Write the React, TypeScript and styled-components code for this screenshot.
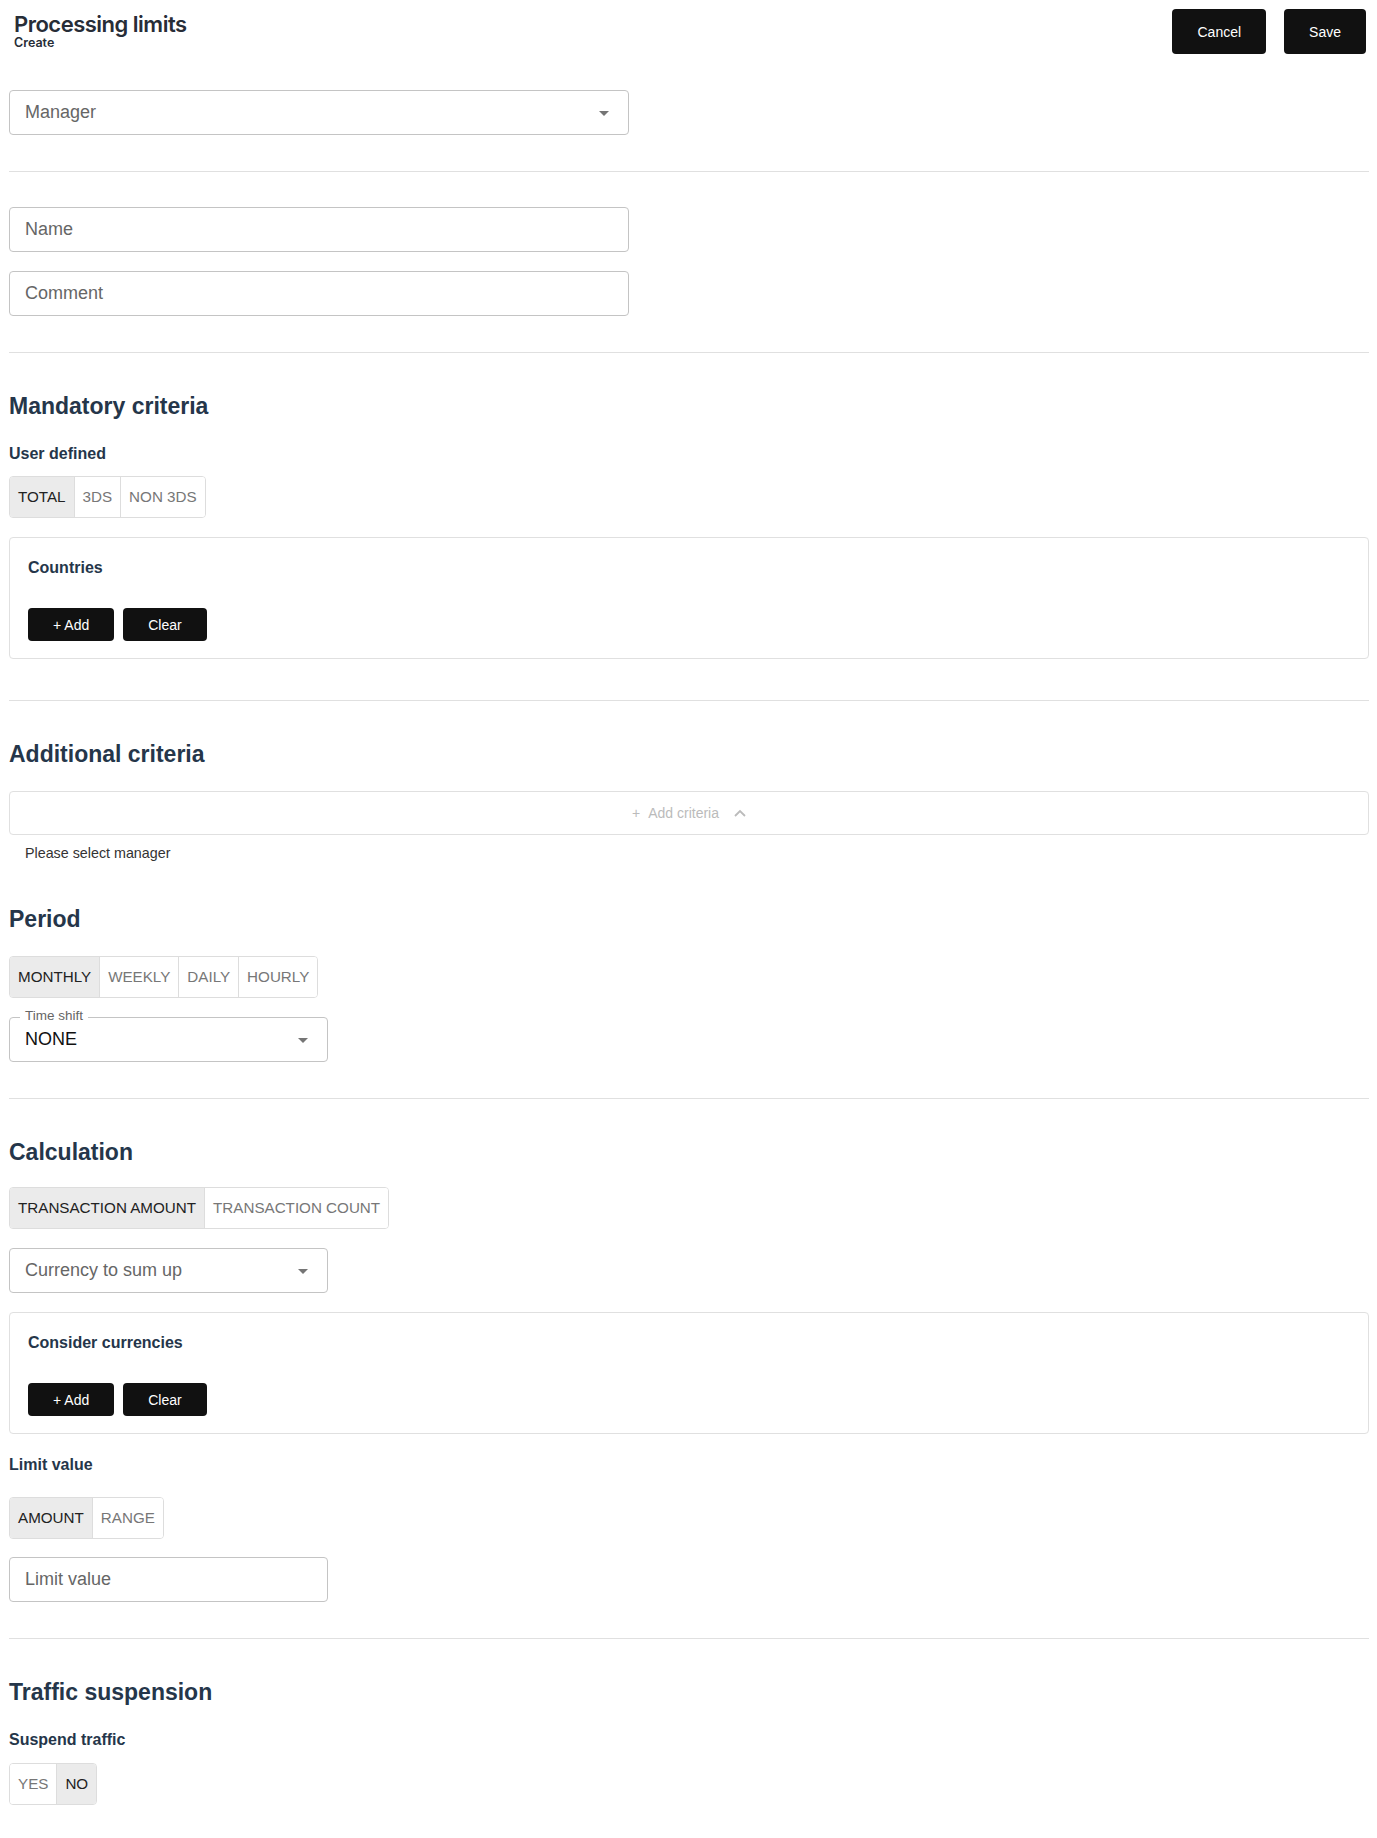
import React from "react";
import styled, { createGlobalStyle } from "styled-components";

const GlobalStyle = createGlobalStyle`
    body {
        margin: 0;
        background: #ffffff;
        font-family: "Liberation Sans", Arial, sans-serif;
        color: #222;
    }
`;

const Page = styled.div`
    padding: 0 8px 33px 9px;
`;

const Header = styled.header`
    display: flex;
    justify-content: space-between;
    align-items: flex-start;
    padding: 9px 3px 0 5px;
`;

const TitleBlock = styled.div`
    padding-top: 3px;
    font-family: Inter, "Noto Sans", sans-serif;
    color: #272d37;
`;

const Title = styled.h1`
    margin: 0;
    font-size: 22px;
    line-height: 24px;
    font-weight: 600;
    letter-spacing: -0.5px;
`;

const Subtitle = styled.div`
    font-size: 12.5px;
    line-height: 14px;
    font-weight: 600;
`;

const Actions = styled.div`
    display: flex;
    gap: 18px;
`;

const DarkButton = styled.button<{ $tall?: boolean }>`
    height: ${(p) => (p.$tall ? "45px" : "33px")};
    padding: 0 25px;
    border: none;
    border-radius: 4px;
    background: #111111;
    color: #ffffff;
    font-family: "Liberation Sans", Arial, sans-serif;
    font-size: 14px;
    cursor: pointer;
`;

const Divider = styled.hr<{ $mt: number }>`
    margin: ${(p) => p.$mt}px 0 0;
    border: none;
    border-top: 1px solid #e0e0e0;
    height: 0;
`;

const Input = styled.input<{ $mt: number; $narrow?: boolean }>`
    display: block;
    box-sizing: border-box;
    margin-top: ${(p) => p.$mt}px;
    width: ${(p) => (p.$narrow ? "319px" : "620px")};
    height: 45px;
    padding: 0 15px;
    border: 1px solid #c4c4c4;
    border-radius: 4px;
    font-family: "Liberation Sans", Arial, sans-serif;
    font-size: 18px;
    color: #111;
    outline: none;

    &::placeholder {
        color: #666;
    }
`;

const SelectBox = styled.div<{ $mt: number; $narrow?: boolean }>`
    position: relative;
    box-sizing: border-box;
    margin-top: ${(p) => p.$mt}px;
    width: ${(p) => (p.$narrow ? "319px" : "620px")};
    height: 45px;
    padding: 0 12px 0 15px;
    display: flex;
    align-items: center;
    justify-content: space-between;
    border: 1px solid #c4c4c4;
    border-radius: 4px;
    font-size: 18px;
`;

const SelectValue = styled.span<{ $filled?: boolean }>`
    color: ${(p) => (p.$filled ? "#111" : "#666")};
`;

const FloatLabel = styled.span`
    position: absolute;
    top: -10px;
    left: 10px;
    padding: 0 5px;
    background: #ffffff;
    font-size: 13.5px;
    line-height: 16px;
    color: #666;
`;

const SectionTitle = styled.h2<{ $mt: number }>`
    margin: ${(p) => p.$mt}px 0 0;
    font-size: 23px;
    line-height: 28px;
    font-weight: 700;
    color: #25364a;
`;

const FieldLabel = styled.div<{ $mt: number }>`
    margin-top: ${(p) => p.$mt}px;
    font-size: 16px;
    line-height: 20px;
    font-weight: 700;
    color: #25364a;
`;

const ToggleGroup = styled.div<{ $mt: number }>`
    display: flex;
    width: fit-content;
    margin-top: ${(p) => p.$mt}px;
    height: 42px;
    box-sizing: border-box;
    border: 1px solid #dddddd;
    border-radius: 4px;
    overflow: hidden;
`;

const ToggleItem = styled.button<{ $active?: boolean }>`
    padding: 0 8px 2px;
    border: none;
    border-left: 1px solid #dddddd;
    background: ${(p) => (p.$active ? "#ebebeb" : "#ffffff")};
    color: ${(p) => (p.$active ? "#222" : "#777")};
    font-family: "Liberation Sans", Arial, sans-serif;
    font-size: 15.2px;
    cursor: pointer;

    &:first-child {
        border-left: none;
    }
`;

const Card = styled.div<{ $mt: number }>`
    margin-top: ${(p) => p.$mt}px;
    padding: 20px 18px 17px;
    border: 1px solid #e0e0e0;
    border-radius: 4px;
`;

const ButtonRow = styled.div`
    display: flex;
    gap: 9px;
    margin-top: 30px;
`;

const CriteriaBar = styled.div<{ $mt: number }>`
    margin-top: ${(p) => p.$mt}px;
    height: 44px;
    box-sizing: border-box;
    display: flex;
    align-items: center;
    justify-content: center;
    gap: 8px;
    border: 1px solid #e0e0e0;
    border-radius: 4px;
    color: #bbbbbb;
    font-size: 14px;
`;

const CriteriaText = styled.span`
    margin-right: 7px;
`;

const Hint = styled.div<{ $mt: number }>`
    margin-top: ${(p) => p.$mt}px;
    padding-left: 16px;
    font-size: 14.3px;
    line-height: 20px;
    color: #333;
`;

const DropArrow = () => (
    <svg width="24" height="24" viewBox="0 0 24 24" fill="#757575">
        <path d="M7 10l5 5 5-5z" />
    </svg>
);

const Caret = () => (
    <svg width="12" height="8" viewBox="0 0 12 8" fill="none" stroke="#bbbbbb" strokeWidth="1.8">
        <polyline points="1,7 6,2 11,7" />
    </svg>
);

const Toggles: React.FC<{ items: string[]; active: number; mt: number }> = ({ items, active, mt }) => (
    <ToggleGroup $mt={mt}>
        {items.map((item, i) => (
            <ToggleItem key={item} $active={i === active}>
                {item}
            </ToggleItem>
        ))}
    </ToggleGroup>
);

const ListCard: React.FC<{ title: string; mt: number }> = ({ title, mt }) => (
    <Card $mt={mt}>
        <FieldLabel $mt={0}>{title}</FieldLabel>
        <ButtonRow>
            <DarkButton>+ Add</DarkButton>
            <DarkButton>Clear</DarkButton>
        </ButtonRow>
    </Card>
);

const App: React.FC = () => {
    return (
        <Page>
            <GlobalStyle />
            <Header>
                <TitleBlock>
                    <Title>Processing limits</Title>
                    <Subtitle>Create</Subtitle>
                </TitleBlock>
                <Actions>
                    <DarkButton $tall>Cancel</DarkButton>
                    <DarkButton $tall>Save</DarkButton>
                </Actions>
            </Header>

            <SelectBox $mt={36}>
                <SelectValue>Manager</SelectValue>
                <DropArrow />
            </SelectBox>

            <Divider $mt={36} />

            <Input $mt={35} placeholder="Name" />
            <Input $mt={19} placeholder="Comment" />

            <Divider $mt={36} />

            <SectionTitle $mt={39}>Mandatory criteria</SectionTitle>
            <FieldLabel $mt={24}>User defined</FieldLabel>
            <Toggles mt={12} items={["TOTAL", "3DS", "NON 3DS"]} active={0} />
            <ListCard mt={19} title="Countries" />

            <Divider $mt={41} />

            <SectionTitle $mt={39}>Additional criteria</SectionTitle>
            <CriteriaBar $mt={23}>
                <span>+</span>
                <CriteriaText>Add criteria</CriteriaText>
                <Caret />
            </CriteriaBar>
            <Hint $mt={8}>Please select manager</Hint>

            <SectionTitle $mt={42}>Period</SectionTitle>
            <Toggles mt={23} items={["MONTHLY", "WEEKLY", "DAILY", "HOURLY"]} active={0} />
            <SelectBox $mt={19} $narrow>
                <FloatLabel>Time shift</FloatLabel>
                <SelectValue $filled>NONE</SelectValue>
                <DropArrow />
            </SelectBox>

            <Divider $mt={36} />

            <SectionTitle $mt={39}>Calculation</SectionTitle>
            <Toggles mt={21} items={["TRANSACTION AMOUNT", "TRANSACTION COUNT"]} active={0} />
            <SelectBox $mt={19} $narrow>
                <SelectValue>Currency to sum up</SelectValue>
                <DropArrow />
            </SelectBox>
            <ListCard mt={19} title="Consider currencies" />

            <FieldLabel $mt={21}>Limit value</FieldLabel>
            <Toggles mt={22} items={["AMOUNT", "RANGE"]} active={0} />
            <Input $mt={18} $narrow placeholder="Limit value" />

            <Divider $mt={36} />

            <SectionTitle $mt={39}>Traffic suspension</SectionTitle>
            <FieldLabel $mt={24}>Suspend traffic</FieldLabel>
            <Toggles mt={13} items={["YES", "NO"]} active={1} />
        </Page>
    );
};

export default App;
